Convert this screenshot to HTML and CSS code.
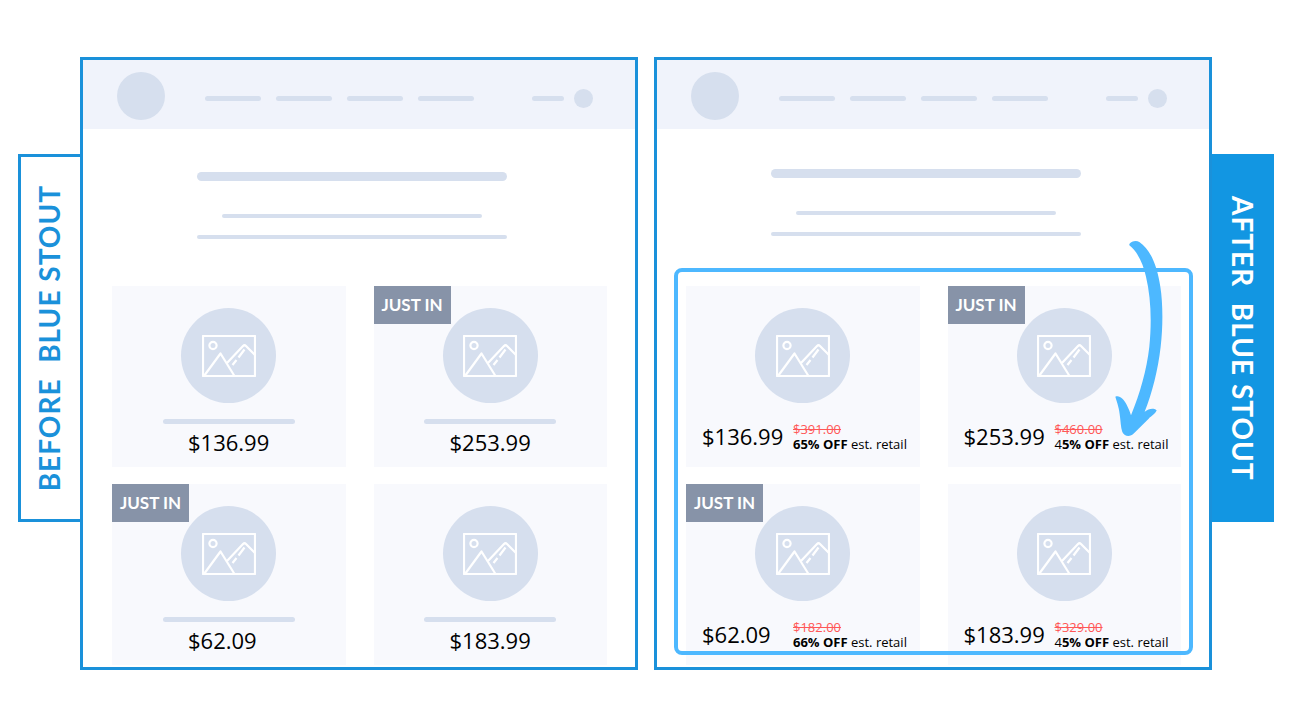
FILE: index.html
```html
<!DOCTYPE html>
<html lang="en">
<head>
    <meta charset="UTF-8">
    <title>Before / After Blue Stout</title>
    <link rel="stylesheet" href="styles.css">
</head>
<body>
<svg class="defs" aria-hidden="true">
    <symbol id="picture" viewBox="0 0 54 42">
        <g fill="none" stroke="#fff" stroke-width="2.2" stroke-linejoin="round">
            <rect x="1" y="1" width="52" height="40"/>
            <circle cx="11" cy="10.5" r="3.6"/>
            <path d="M2 41L18.5 18.5L32.5 41"/>
            <path d="M25 28L41 11Q42.500 9.500 44 11L53 20"/>
            <path d="M42.500 14.500L36.500 22.500M34.500 25L30.500 30"/>
        </g>
    </symbol>
</svg>

<div id="wrap">
    <h2 class="tab tab_before"><span>BEFORE  BLUE STOUT</span></h2>

    <div class="panel">
        <div class="header">
            <div class="logo"></div>
            <div class="nav"><i></i><i></i><i></i><i></i></div>
            <div class="account"><i></i><b></b></div>
        </div>
        <div class="intro">
            <div class="title"></div>
            <div class="line short"></div>
            <div class="line"></div>
        </div>
        <ul class="list">
            <li>
                <div class="pic"><svg><use href="#picture"/></svg></div>
                <div class="name"></div>
                <p class="price">$136.99</p>
            </li>
            <li>
                <span class="badge">JUST IN</span>
                <div class="pic"><svg><use href="#picture"/></svg></div>
                <div class="name"></div>
                <p class="price">$253.99</p>
            </li>
            <li>
                <span class="badge">JUST IN</span>
                <div class="pic"><svg><use href="#picture"/></svg></div>
                <div class="name"></div>
                <p class="price">$62.09</p>
            </li>
            <li>
                <div class="pic"><svg><use href="#picture"/></svg></div>
                <div class="name"></div>
                <p class="price">$183.99</p>
            </li>
        </ul>
    </div>

    <div class="panel panel_after">
        <div class="header">
            <div class="logo"></div>
            <div class="nav"><i></i><i></i><i></i><i></i></div>
            <div class="account"><i></i><b></b></div>
        </div>
        <div class="intro">
            <div class="title"></div>
            <div class="line short"></div>
            <div class="line"></div>
        </div>
        <ul class="list">
            <li>
                <div class="pic"><svg><use href="#picture"/></svg></div>
                <div class="offer">
                    <p class="price">$136.99</p>
                    <p class="retail"><del>$391.00</del><br><strong>65% OFF</strong> est. retail</p>
                </div>
            </li>
            <li>
                <span class="badge">JUST IN</span>
                <div class="pic"><svg><use href="#picture"/></svg></div>
                <div class="offer">
                    <p class="price">$253.99</p>
                    <p class="retail"><del>$460.00</del><br>4<strong>5% OFF</strong> est. retail</p>
                </div>
            </li>
            <li>
                <span class="badge">JUST IN</span>
                <div class="pic"><svg><use href="#picture"/></svg></div>
                <div class="offer">
                    <p class="price">$62.09</p>
                    <p class="retail"><del>$182.00</del><br><strong>66% OFF</strong> est. retail</p>
                </div>
            </li>
            <li>
                <div class="pic"><svg><use href="#picture"/></svg></div>
                <div class="offer">
                    <p class="price">$183.99</p>
                    <p class="retail"><del>$329.00</del><br>4<strong>5% OFF</strong> est. retail</p>
                </div>
            </li>
        </ul>
        <div class="highlight"></div>
        <svg class="arrow" viewBox="552 30 150 591" aria-hidden="true">
            <path fill="#4db8ff" d="M598 42C604 34 618 30 628 36C662 58 682 110 691 170C699 220 699 290 692 350C684 420 666 490 644 545C656 538 668 532 680 541C676 552 664 558 656 566L612 610C600 622 584 620 577 606C572 590 572 575 570 560C568 535 562 520 556 500C568 494 582 508 590 524C597 538 600 546 603 556C630 490 650 420 658 350C666 270 662 200 648 140C640 104 624 66 598 46Z"/>
        </svg>
    </div>

    <h2 class="tab tab_after"><span>AFTER  BLUE STOUT</span></h2>
</div>
</body>
</html>
```
FILE: styles.css
```css
body, div, ul, li, h2, p {
    margin: 0;
    padding: 0;
}

body {
    background-color: #fff;
    font-family: "Open Sans", "Noto Sans", sans-serif;
    color: #000;
}

ul, li {
    list-style-type: none;
}

.defs {
    position: absolute;
    width: 0;
    height: 0;
}

#wrap {
    display: flex;
    align-items: flex-start;
    padding: 57px 18px;
}

/* side labels */
.tab {
    display: flex;
    box-sizing: border-box;
    flex: none;
    align-items: center;
    justify-content: center;
    width: 62px;
    min-height: 368px;
    margin-top: 97px;
    border: 3px solid #1a91da;
    font-family: Lato, sans-serif;
    font-size: 28px;
    line-height: 32px;
    font-weight: 700;
    letter-spacing: 1px;
    white-space: pre;
    writing-mode: vertical-rl;
    color: #1a91da;
}

.tab_before {
    padding-right: 4px;
    border-right: 0;
}

.tab_before span {
    transform: rotate(180deg);
}

.tab_after {
    border-color: #1296e2;
    background-color: #1296e2;
    color: #fff;
}

/* store page */
.panel {
    position: relative;
    flex: 1;
    padding-bottom: 2px;
    border: 3px solid #1a91da;
}

.panel_after {
    margin-left: 16px;
}

.header {
    display: flex;
    padding: 12px 42px 9px 34px;
    background-color: #f0f3fb;
}

.logo {
    width: 48px;
    height: 48px;
    border-radius: 50%;
    background-color: #d6dfee;
}

.nav, .account {
    display: flex;
    align-items: center;
    padding-top: 5px;
}

.nav {
    gap: 15px;
    margin-left: 40px;
}

.account {
    gap: 10px;
    margin-left: auto;
}

.nav i, .account i {
    width: 56px;
    height: 5px;
    border-radius: 3px;
    background-color: #d6dfee;
}

.account i {
    width: 32px;
}

.account b {
    width: 19px;
    height: 19px;
    border-radius: 50%;
    background-color: #d6dfee;
}

.intro {
    width: 310px;
    padding: 43px 0 47px 114px;
}

.panel_after .intro {
    padding-top: 40px;
    padding-bottom: 50px;
}

.title {
    height: 9px;
    margin-bottom: 33px;
    border-radius: 5px;
    background-color: #d6dfee;
}

.line {
    height: 4px;
    border-radius: 2px;
    background-color: #d6dfee;
}

.short {
    margin: 0 25px 17px;
}

.list {
    display: grid;
    grid-template-columns: 1fr 1fr;
    gap: 17px 28px;
    padding: 0 28px 0 29px;
}

.list li {
    position: relative;
    box-sizing: border-box;
    height: 181px;
    padding-top: 22px;
    background-color: #f8f9fd;
}

.badge {
    position: absolute;
    top: 0;
    left: 0;
    width: 77px;
    font-family: Lato, sans-serif;
    font-size: 17px;
    line-height: 38px;
    font-weight: 700;
    text-align: center;
    color: #fff;
    background-color: #8793a8;
}

.pic {
    display: flex;
    align-items: center;
    justify-content: center;
    width: 95px;
    height: 95px;
    margin: 0 auto;
    border-radius: 50%;
    background-color: #d6dfee;
}

.pic svg {
    width: 54px;
    height: 42px;
}

.name {
    width: 132px;
    height: 5px;
    margin: 16px auto 4px;
    border-radius: 3px;
    background-color: #d6dfee;
}

.price {
    padding-left: 76px;
    font-size: 22px;
    line-height: 28px;
}

.offer {
    display: flex;
    align-items: flex-start;
    padding: 19px 0 0 16px;
}

.offer .price {
    width: 91px;
    padding-left: 0;
}

.retail {
    font-size: 13px;
    line-height: 15px;
    white-space: nowrap;
}

.retail del {
    color: #ff5757;
}

.highlight {
    position: absolute;
    top: 208px;
    right: 16px;
    bottom: 12px;
    left: 17px;
    border: 4px solid #4db8ff;
    border-radius: 8px;
}

.arrow {
    position: absolute;
    top: 180px;
    right: 45px;
    width: 50px;
    height: 197px;
}
```
